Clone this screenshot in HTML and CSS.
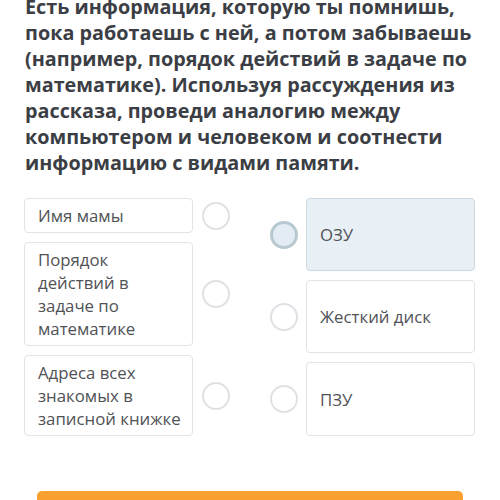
FILE: index.html
```html
<!DOCTYPE html>
<html lang="ru">
<head>
<meta charset="utf-8">
<link rel="stylesheet" href="styles.css">
</head>
<body>
<div class="page">
  <p class="question">Есть информация, которую ты помнишь, пока работаешь с ней, а потом забываешь (например, порядок действий в задаче по математике). Используя рассуждения из рассказа, проведи аналогию между компьютером и человеком и соотнести информацию с видами памяти.</p>
  <div class="match">
    <div class="col col-left">
      <div class="row">
        <div class="card h1">Имя мамы</div>
        <span class="dot"></span>
      </div>
      <div class="row">
        <div class="card h2">Порядок действий в задаче по математике</div>
        <span class="dot"></span>
      </div>
      <div class="row">
        <div class="card h3">Адреса всех знакомых в записной книжке</div>
        <span class="dot"></span>
      </div>
    </div>
    <div class="col col-right">
      <div class="row">
        <span class="dot dot-active"></span>
        <div class="card card-right card-active">ОЗУ</div>
      </div>
      <div class="row">
        <span class="dot"></span>
        <div class="card card-right">Жесткий диск</div>
      </div>
      <div class="row row-last">
        <span class="dot"></span>
        <div class="card card-right">ПЗУ</div>
      </div>
    </div>
  </div>
  <div class="submit"></div>
</div>
</body>
</html>
```
FILE: styles.css
```css
html, body {
  margin: 0;
  padding: 0;
  background: #ffffff;
  overflow: hidden;
}
.page {
  width: 500px;
  height: 500px;
  overflow: hidden;
  font-family: "Open Sans", "Liberation Sans", sans-serif;
}
.question {
  margin: -6px 25px 0 25px;
  font-size: 19.8px;
  line-height: 26px;
  font-weight: 700;
  color: #3b3e44;
}
.match {
  display: flex;
  justify-content: space-between;
  margin: 22px 25px 0 24px;
}
.col {
  display: flex;
  flex-direction: column;
  gap: 9px;
}
.col-left {
  width: 206px;
}
.col-right {
  width: 205px;
}
.row {
  display: flex;
  align-items: center;
  gap: 9px;
}
.col-right .row {
  gap: 8px;
}
.card {
  box-sizing: border-box;
  border: 1px solid #e1e4e7;
  border-radius: 4px;
  background: #fff;
  font-size: 16.8px;
  line-height: 23px;
  color: #505255;
  padding: 5px 7px 5px 13px;
}
.col-left .card {
  width: 169px;
  flex: none;
}
.h1 { height: 35px; }
.h2 { height: 104px; }
.h3 { height: 81px; }
.card-right {
  flex: 1;
  height: 73px;
  display: flex;
  align-items: center;
}
.row-last .card-right {
  height: 74px;
}
.card-active {
  background: #e8f0f5;
  border-color: #cbd9e2;
}
.dot {
  box-sizing: border-box;
  flex: none;
  width: 28px;
  height: 28px;
  border-radius: 50%;
  border: 2px solid #dfe2e5;
  background: #fff;
}
.dot-active {
  border: 3px solid #b7c8d1;
  background: #e3ecf2;
}
.submit {
  margin: 55px 37px 0 37px;
  height: 46px;
  border-radius: 5px;
  background: #f8a130;
}
```
